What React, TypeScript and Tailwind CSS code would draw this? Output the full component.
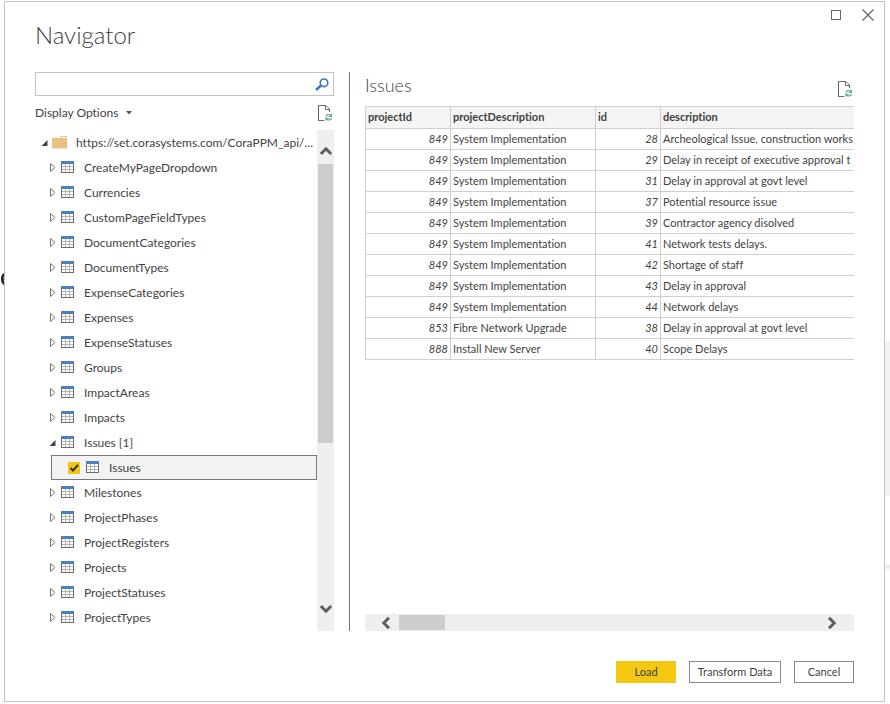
import { useState } from 'react';

const tables = [
  'CreateMyPageDropdown',
  'Currencies',
  'CustomPageFieldTypes',
  'DocumentCategories',
  'DocumentTypes',
  'ExpenseCategories',
  'Expenses',
  'ExpenseStatuses',
  'Groups',
  'ImpactAreas',
  'Impacts',
  'Issues',
  'Milestones',
  'ProjectPhases',
  'ProjectRegisters',
  'Projects',
  'ProjectStatuses',
  'ProjectTypes',
];

const issues = [
  { projectId: 849, project: 'System Implementation', id: 28, description: 'Archeological Issue, construction works' },
  { projectId: 849, project: 'System Implementation', id: 29, description: 'Delay in receipt of executive approval t' },
  { projectId: 849, project: 'System Implementation', id: 31, description: 'Delay in approval at govt level' },
  { projectId: 849, project: 'System Implementation', id: 37, description: 'Potential resource issue' },
  { projectId: 849, project: 'System Implementation', id: 39, description: 'Contractor agency disolved' },
  { projectId: 849, project: 'System Implementation', id: 41, description: 'Network tests delays.' },
  { projectId: 849, project: 'System Implementation', id: 42, description: 'Shortage of staff' },
  { projectId: 849, project: 'System Implementation', id: 43, description: 'Delay in approval' },
  { projectId: 849, project: 'System Implementation', id: 44, description: 'Network delays' },
  { projectId: 853, project: 'Fibre Network Upgrade', id: 38, description: 'Delay in approval at govt level' },
  { projectId: 888, project: 'Install New Server', id: 40, description: 'Scope Delays' },
];

function TableIcon() {
  return (
    <svg width="13" height="13" viewBox="0 0 13 13" shapeRendering="crispEdges" className="block shrink-0">
      <rect width="13" height="12" fill="#6d6d6d" />
      <rect x="1" y="3" width="11" height="8" fill="#fff" />
      <path d="M1 5.5h11M1 8.5h11M4.5 3v8M8.5 3v8" stroke="#b4b4b4" />
      <rect width="13" height="3" fill="#4a80bd" />
    </svg>
  );
}

function RefreshPageIcon() {
  return (
    <svg width="15" height="17" viewBox="0 0 15 17" fill="none" className="shrink-0">
      <path d="M6 15.5H.5V.5H8l3.500 3.500v3M7.500.5v4h4" stroke="#6a6a6a" />
      <path d="M8 11.500c.5-2 3.500-2.500 5-.8M13.500 8.800v2.700h-2.700M13.500 13c-.5 2-3.500 2.500-5 .8M8 15.700V13h2.700" stroke="#5fa88a" strokeWidth="1.200" />
    </svg>
  );
}

function Arrow({ open }: { open: boolean }) {
  return (
    <svg width="7" height="9" viewBox="0 0 7 9" className="shrink-0">
      {open ? <path d="M6.500 2v6H.5z" fill="#444" /> : <path d="M1.500.5v8L6 4.500z" fill="none" stroke="#777" />}
    </svg>
  );
}

// Points up, rotate it for the other directions
function Chevron({ className = '' }: { className?: string }) {
  return (
    <svg width="12" height="12" viewBox="0 0 12 12" fill="none" className={className}>
      <path d="M.8 9L6 3.800 11.200 9" stroke="#5f5f5f" strokeWidth="3" />
    </svg>
  );
}

export default function App() {
  const [search, setSearch] = useState('');
  const [open, setOpen] = useState<string[]>(['Issues']);
  const [checked, setChecked] = useState(true);

  const toggle = (name: string) =>
    setOpen(open.includes(name) ? open.filter((n) => n !== name) : [...open, name]);

  return (
    <div className="relative flex min-h-screen overflow-hidden bg-white pt-px pr-[5px] pb-0.5 pl-1 font-[Lato,sans-serif] text-xs text-[#3f3f3f] [font-variant-ligatures:none]">
      {/* Page behind the dialog */}
      <div className="absolute top-[341px] right-0 h-[155px] w-[5px] bg-[#f3f2f1]" />
      <div className="absolute top-[565px] right-0 h-1.5 w-[5px] bg-linear-to-b from-[#e4e4e4] to-white" />
      <div className="absolute top-[272px] left-px h-[14px] w-3 rounded-full border-2 border-[#222] bg-[#555]" />

      <div
        role="dialog"
        aria-labelledby="title"
        className="relative flex min-w-0 flex-1 flex-col border border-[#c3c3c3] bg-white px-[30px] pb-[18px]"
      >
        {/* Header */}
        <header className="flex h-[70px] items-center pb-1">
          <h1 id="title" className="text-2xl font-light">Navigator</h1>
        </header>
        <div className="absolute top-[5px] right-2 flex gap-4">
          <button aria-label="Maximize" className="flex size-4 items-center justify-center">
            <span className="size-2.5 border border-[#666]" />
          </button>
          <button aria-label="Close" className="flex size-4 items-center justify-center">
            <svg width="12" height="12" viewBox="0 0 12 12" stroke="#666" strokeWidth="1.300">
              <path d="M.5.5l11 11M11.500.5l-11 11" />
            </svg>
          </button>
        </div>

        <main className="flex min-h-0 flex-1">
          {/* Source tree */}
          <section className="flex w-[299px] shrink-0 flex-col">
            <div className="flex h-6 items-center border border-[#c3c3c3] pr-1">
              <input
                aria-label="Search"
                value={search}
                onChange={(e) => setSearch(e.target.value)}
                className="min-w-0 flex-1 px-1 outline-none"
              />
              <button aria-label="Search tables">
                <svg width="14" height="13" viewBox="0 0 14 13" fill="none" stroke="#3d74b5">
                  <circle cx="9" cy="4.800" r="3.800" strokeWidth="1.600" />
                  <path d="M6 7.500L1 12" strokeWidth="2.400" />
                </svg>
              </button>
            </div>
            <div className="flex h-[34px] items-center justify-between pr-px">
              <button className="flex items-center gap-2">
                Display Options
                <svg width="6" height="4" viewBox="0 0 6 4">
                  <path d="M0 0h6L3 3.500z" fill="#555" />
                </svg>
              </button>
              <button aria-label="Refresh tree">
                <RefreshPageIcon />
              </button>
            </div>

            <div className="flex flex-1">
              <ul className="min-w-0 flex-1">
                <li className="flex h-[25px] items-center pl-1.5">
                  <Arrow open />
                  <svg width="16" height="13" viewBox="0 0 16 13" className="ml-1 shrink-0">
                    <path d="M0 2h8l1-2h6v12.500H0z" fill="#e9c281" />
                    <path d="M9.500 1.500h4.500" stroke="#fff" />
                  </svg>
                  <span className="ml-2 whitespace-nowrap">https://set.corasystems.com/CoraPPM_api/...</span>
                </li>
                {tables.map((name) => (
                  <li key={name}>
                    <button
                      onClick={() => toggle(name)}
                      aria-expanded={open.includes(name)}
                      className="flex h-[25px] w-full items-center pl-3.5"
                    >
                      <Arrow open={open.includes(name)} />
                      <span className="mr-2.5 ml-[5px]">
                        <TableIcon />
                      </span>
                      {name === 'Issues' ? 'Issues [1]' : name}
                    </button>
                    {name === 'Issues' && open.includes(name) && (
                      <label className="ml-4 flex h-[25px] items-center border border-[#777] bg-[#f3f3f3] pl-4">
                        <input
                          type="checkbox"
                          checked={checked}
                          onChange={(e) => setChecked(e.target.checked)}
                          className="peer size-3 appearance-none border border-[#f2c811] checked:bg-[#f2c811]"
                        />
                        <svg
                          width="12"
                          height="12"
                          viewBox="0 0 12 12"
                          fill="none"
                          className="pointer-events-none invisible -ml-3 peer-checked:visible"
                        >
                          <path d="M2.500 6l2.500 2.500 5-5.500" stroke="#333" strokeWidth="2" />
                        </svg>
                        <span className="mr-2.5 ml-1.5">
                          <TableIcon />
                        </span>
                        Issues
                      </label>
                    )}
                  </li>
                ))}
              </ul>
              <div className="flex w-[17px] flex-col items-center bg-[#efefef]">
                <button aria-label="Scroll up" className="flex h-[34px] items-center pt-2">
                  <Chevron />
                </button>
                <div className="h-[279px] w-[15px] bg-[#cdcdcd]" />
                <button aria-label="Scroll down" className="mt-auto flex h-11 items-center">
                  <Chevron className="rotate-180" />
                </button>
              </div>
            </div>
          </section>

          <div className="mx-[15px] w-px bg-[#777]" />

          {/* Preview */}
          <section className="flex min-w-0 flex-1 flex-col">
            <div className="flex h-[34px] items-center justify-between pr-px">
              <h2 className="pb-2 text-lg font-light">Issues</h2>
              <button aria-label="Refresh preview">
                <RefreshPageIcon />
              </button>
            </div>
            <div className="flex-1 overflow-hidden">
              <table className="w-full table-fixed border-separate border-spacing-0 border-t border-l border-[#cfcfcf] text-[11px] whitespace-nowrap">
                <thead>
                  <tr className="h-[22px] bg-[#f4f4f4] text-left">
                    <th className="w-[85px] border-r border-b border-[#cfcfcf] p-0 pl-0.5">projectId</th>
                    <th className="w-[145px] border-r border-b border-[#cfcfcf] p-0 pl-0.5">projectDescription</th>
                    <th className="w-[65px] border-r border-b border-[#cfcfcf] p-0 pl-0.5">id</th>
                    <th className="border-b border-[#cfcfcf] p-0 pl-0.5">description</th>
                  </tr>
                </thead>
                <tbody>
                  {issues.map((row) => (
                    <tr key={row.id} className="h-[21px]">
                      <td className="border-r border-b border-[#cfcfcf] p-0 pr-0.5 text-right italic">{row.projectId}</td>
                      <td className="border-r border-b border-[#cfcfcf] p-0 pl-0.5">{row.project}</td>
                      <td className="border-r border-b border-[#cfcfcf] p-0 pr-0.5 text-right italic">{row.id}</td>
                      <td className="overflow-hidden border-b border-[#cfcfcf] p-0 pl-0.5">{row.description}</td>
                    </tr>
                  ))}
                </tbody>
              </table>
            </div>
            <div className="flex h-[17px] items-center bg-[#efefef]">
              <button aria-label="Scroll left" className="flex w-[34px] justify-center pl-2">
                <Chevron className="-rotate-90" />
              </button>
              <div className="h-[15px] w-[46px] bg-[#cdcdcd]" />
              <button aria-label="Scroll right" className="ml-auto flex w-11 justify-center">
                <Chevron className="rotate-90" />
              </button>
            </div>
          </section>
        </main>

        {/* Actions */}
        <footer className="flex justify-end gap-[13px] pt-[30px] text-[11px]">
          <button className="h-[22px] w-[60px] bg-[#f2c811]">Load</button>
          <button className="h-[22px] w-[92px] border border-[#888] bg-white">Transform Data</button>
          <button className="h-[22px] w-[60px] border border-[#888] bg-white">Cancel</button>
        </footer>
      </div>
    </div>
  );
}
